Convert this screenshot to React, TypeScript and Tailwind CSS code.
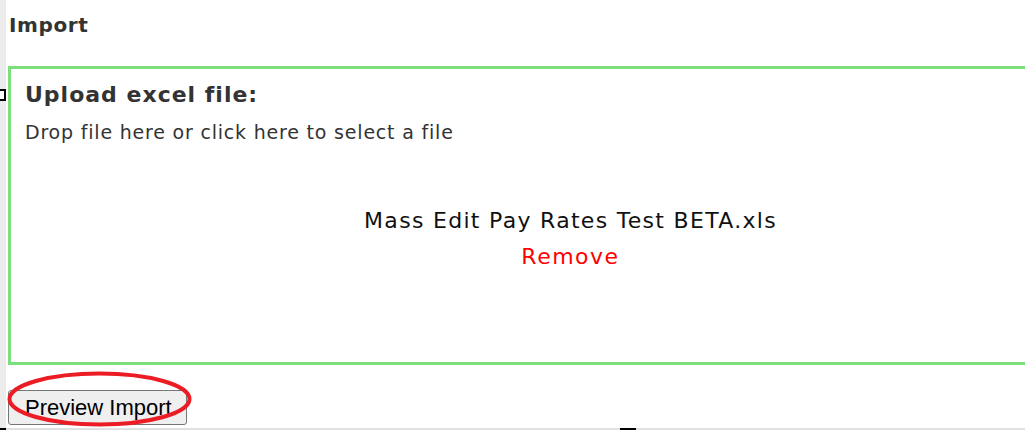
import React from "react";

export default function App() {
  return (
    <div className="relative w-[1025px] h-[430px] overflow-hidden bg-white" style={{ fontFamily: '"DejaVu Sans", Verdana, sans-serif' }}>
      <div className="flex h-[428px]">
        <div className="w-[6px] shrink-0 bg-[#ececec]" />
        <div className="flex-1 pl-[2px] flex flex-col">
          <div className="pt-[13px] h-[37px] text-[20px] leading-[24px] font-bold text-[#333] pl-[1px] tracking-[0.6px]">Import</div>
          <div className="mt-[29px] w-[1125px] h-[299px] border-[3px] border-[#7be07b] px-[14px] pt-[12px]">
            <div className="text-[22px] leading-[28px] font-bold text-[#333] tracking-[1px]">Upload excel file:</div>
            <div className="mt-[11px] text-[19px] leading-[24px] text-[#333] tracking-[0.8px]">Drop file here or click here to select a file</div>
            <div className="mt-[59px] flex flex-col items-center text-[22px] leading-[36px]">
              <div className="text-[#111] tracking-[1.3px]">Mass Edit Pay Rates Test BETA.xls</div>
              <div className="text-[#ff0000] tracking-[1.5px]">Remove</div>
            </div>
          </div>
          <div className="relative mt-[25px] w-fit">
            <button className="h-[35px] pl-[16px] pr-[14px] bg-[#efefef] border border-[#767676] rounded-[3px] text-[22px] leading-[24px] text-black" style={{ fontFamily: '"Liberation Sans", Arial, sans-serif' }}>
              Preview Import
            </button>
            <svg className="absolute left-[-2px] top-[-19px] pointer-events-none" width="192" height="60" viewBox="0 0 192 60">
              <ellipse cx="93.5" cy="28" rx="90" ry="25.5" fill="none" stroke="#ec1c24" strokeWidth="4" />
            </svg>
          </div>
        </div>
      </div>
      <div className="h-[2px] bg-[#e0e0e0] relative">
        <div className="absolute left-0 top-0 w-[6px] h-[2px] bg-black" />
        <div className="absolute left-[620px] top-0 w-[16px] h-[2px] bg-black" />
      </div>
      <div className="absolute left-[-6px] top-[89px] w-[12px] h-[12px] border-2 border-black bg-white" />
    </div>
  );
}
